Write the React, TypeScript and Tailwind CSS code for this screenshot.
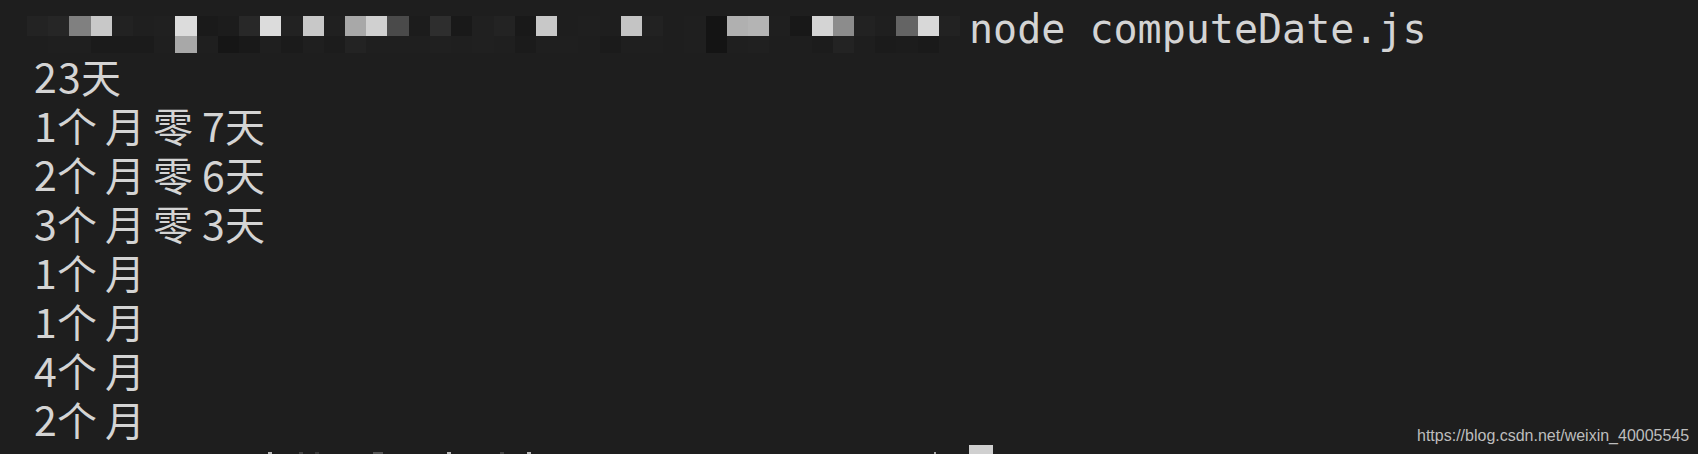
const mosaicTop = [
  "bg-[#232323]", "bg-[#262626]", "bg-[#808080]", "bg-[#c8c8c8]", "bg-[#222222]", "bg-[#1f1f1f]",
  "bg-[#202020]", "bg-[#dcdcdc]", "bg-[#1a1a1a]", "bg-[#1c1c1c]", "bg-[#282828]", "bg-[#dcdcdc]",
  "bg-[#222222]", "bg-[#c8c8c8]", "bg-[#202020]", "bg-[#a8a8a8]", "bg-[#d0d0d0]", "bg-[#4a4a4a]",
  "bg-[#1c1c1c]", "bg-[#2e2e2e]", "bg-[#191919]", "bg-[#202020]",
  "bg-[#232323]", "bg-[#191919]", "bg-[#c8c8c8]", "bg-[#1e1e1e]", "bg-[#1f1f1f]", "bg-[#1e1e1e]",
  "bg-[#c4c4c4]", "bg-[#222222]", "bg-[#1e1e1e]", "bg-[#1f1f1f]", "bg-[#141414]", "bg-[#b0b0b0]",
  "bg-[#b4b4b4]", "bg-[#1f1f1f]", "bg-[#181818]", "bg-[#d4d4d4]", "bg-[#8c8c8c]", "bg-[#222222]",
  "bg-[#1f1f1f]", "bg-[#646464]", "bg-[#d8d8d8]", "bg-[#222222]",
];

const mosaicBottom = [
  "bg-[#1e1e1e]", "bg-[#1f1f1f]", "bg-[#1f1f1f]", "bg-[#1b1b1b]", "bg-[#1b1b1b]", "bg-[#1b1b1b]",
  "bg-[#1f1f1f]", "bg-[#a8a8a8]", "bg-[#1f1f1f]", "bg-[#161616]", "bg-[#191919]", "bg-[#1f1f1f]",
  "bg-[#1b1b1b]", "bg-[#1f1f1f]", "bg-[#1c1c1c]", "bg-[#232323]", "bg-[#1f1f1f]", "bg-[#1f1f1f]",
  "bg-[#1f1f1f]", "bg-[#202020]", "bg-[#1f1f1f]", "bg-[#202020]",
  "bg-[#1f1f1f]", "bg-[#1b1b1b]", "bg-[#1f1f1f]", "bg-[#1f1f1f]", "bg-[#1e1e1e]", "bg-[#1b1b1b]",
  "bg-[#1f1f1f]", "bg-[#1f1f1f]", "bg-[#1e1e1e]", "bg-[#1f1f1f]", "bg-[#141414]", "bg-[#1f1f1f]",
  "bg-[#202020]", "bg-[#1e1e1e]", "bg-[#1e1e1e]", "bg-[#1c1c1c]", "bg-[#232323]", "bg-[#1e1e1e]",
  "bg-[#1b1b1b]", "bg-[#1c1c1c]", "bg-[#1a1a1a]", "bg-[#1e1e1e]",
];

const output = ["23天", "1个月零7天", "2个月零6天", "3个月零3天", "1个月", "1个月", "4个月", "2个月"];

// tops of the next (blurred) prompt peeking in at the bottom edge: [gap before + width, colour]
const peek: [string, string][] = [
  ["ml-[235px] w-[4px]", "bg-[#bbbbbb]"],
  ["ml-[27px] w-[4px]", "bg-[#444444]"],
  ["ml-[12px] w-[4px]", "bg-[#3a3a3a]"],
  ["ml-[54px] w-[10px]", "bg-[#555555]"],
  ["ml-[64px] w-[4px]", "bg-[#bbbbbb]"],
  ["ml-[49px] w-[4px]", "bg-[#444444]"],
  ["ml-[23px] w-[4px]", "bg-[#bbbbbb]"],
  ["ml-[403px] w-[2px]", "bg-[#aaaaaa]"],
];

// terminal cells: ascii takes one column, CJK takes two
function Line({ text }: { text: string }) {
  return (
    <div className="flex h-[49px] items-baseline pl-[33px] font-['Noto_Sans_CJK_SC','Noto_Sans',sans-serif] leading-[49px] whitespace-pre">
      {Array.from(text).map((ch, i) =>
        ch.charCodeAt(0) > 255 ? (
          <span key={i} className="w-[48px] shrink-0 text-[40px]">
            {ch}
          </span>
        ) : (
          <span key={i} className="w-[24px] shrink-0 pl-[1px] text-[41px]">
            {ch}
          </span>
        )
      )}
    </div>
  );
}

export default function App() {
  return (
    <div className="relative h-[454px] w-[1698px] overflow-hidden bg-[#1e1e1e] text-[#d4d4d4]">
      <div className="pt-[2px]">
        {/* prompt, blurred out */}
        <div className="flex h-[49px]">
          <div className="ml-[27px] mt-[14px] w-[933px] shrink-0">
            <div className="grid grid-cols-[repeat(44,minmax(0,1fr))]">
              {mosaicTop.map((c, i) => (
                <div key={i} className={`h-[20px] ${c}`} />
              ))}
              {mosaicBottom.map((c, i) => (
                <div key={i} className={`h-[17px] ${c}`} />
              ))}
            </div>
          </div>
          <span className="ml-[9px] pt-[3px] font-['DejaVu_Sans_Mono',monospace] text-[40px] leading-[49px] whitespace-pre">
            node computeDate.js
          </span>
        </div>

        {output.map((t, i) => (
          <Line key={i} text={t} />
        ))}

        {/* next prompt, only the top edge shows */}
        <div className="flex h-[49px] pl-[33px]">
          <div className="flex w-[936px] shrink-0 items-start pt-[9px]">
            {peek.map(([pos, c], i) => (
              <span key={i} className={`h-[2px] shrink-0 ${pos} ${c}`} />
            ))}
          </div>
          <div className="mt-[2px] h-[20px] w-[24px] bg-[#d0d0d0]" />
        </div>
      </div>

      <div className="absolute left-[1417px] top-[428px] font-['Liberation_Sans',Arial,sans-serif] text-[16px] leading-[16px] text-[#bdbdbd]">
        https://blog.csdn.net/weixin_40005545
      </div>
    </div>
  );
}
